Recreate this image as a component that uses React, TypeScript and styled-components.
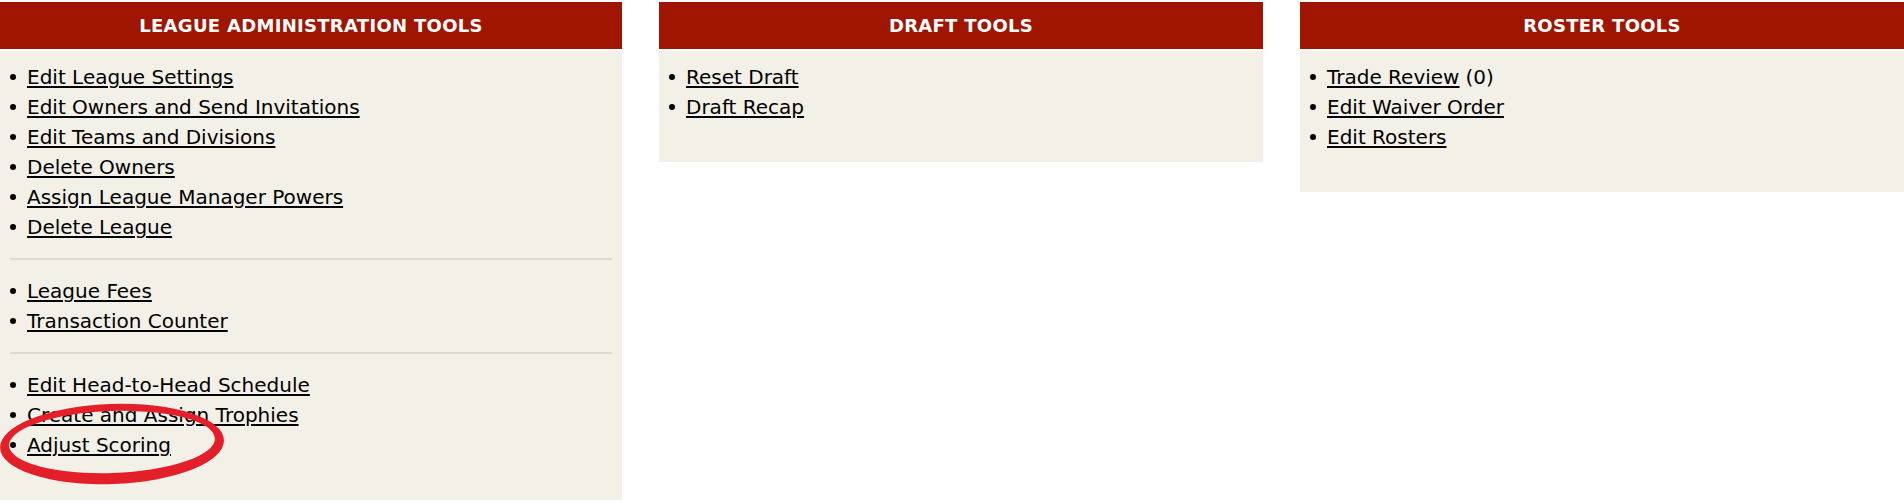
import styled, { createGlobalStyle } from 'styled-components';

interface ToolLink {
  label: string;
  note?: string;
}

interface ToolPanel {
  title: string;
  groups: ToolLink[][];
  circled?: boolean;
}

const panels: ToolPanel[] = [
  {
    title: 'League Administration Tools',
    circled: true,
    groups: [
      [
        { label: 'Edit League Settings' },
        { label: 'Edit Owners and Send Invitations' },
        { label: 'Edit Teams and Divisions' },
        { label: 'Delete Owners' },
        { label: 'Assign League Manager Powers' },
        { label: 'Delete League' },
      ],
      [{ label: 'League Fees' }, { label: 'Transaction Counter' }],
      [
        { label: 'Edit Head-to-Head Schedule' },
        { label: 'Create and Assign Trophies' },
        { label: 'Adjust Scoring' },
      ],
    ],
  },
  {
    title: 'Draft Tools',
    groups: [[{ label: 'Reset Draft' }, { label: 'Draft Recap' }]],
  },
  {
    title: 'Roster Tools',
    groups: [
      [
        { label: 'Trade Review', note: '(0)' },
        { label: 'Edit Waiver Order' },
        { label: 'Edit Rosters' },
      ],
    ],
  },
];

const GlobalStyle = createGlobalStyle`
  html, body {
    margin: 0;
    padding: 0;
    background: #ffffff;
  }
  body {
    font-family: "DejaVu Sans", Verdana, sans-serif;
    color: #000;
  }
`;

const Columns = styled.div`
  display: grid;
  grid-template-columns: 622px 604px 604px;
  column-gap: 37px;
  align-items: start;
  padding-top: 2px;
  width: 1904px;
`;

const Panel = styled.section`
  position: relative;
  display: flex;
  flex-direction: column;
`;

const Header = styled.h2`
  margin: 0;
  height: 47px;
  display: flex;
  align-items: center;
  justify-content: center;
  background: #a01500;
  color: #ffffff;
  font-family: "DejaVu Sans", Verdana, sans-serif;
  font-weight: bold;
  font-size: 18px;
  letter-spacing: 0.3px;
  text-transform: uppercase;
`;

const Body = styled.div`
  margin-top: 2px;
  background: #f3f0e7;
  padding: 11px 10px 40px;
`;

const Divider = styled.hr`
  margin: 16px 0;
  border: none;
  height: 2px;
  background: #dcdad4;
`;

const List = styled.ul`
  list-style: none;
  margin: 0;
  padding: 0;
`;

const Item = styled.li`
  display: flex;
  align-items: center;
  height: 30px;
  font-size: 20px;
  white-space: nowrap;

  &::before {
    content: '';
    width: 6px;
    height: 6px;
    border-radius: 50%;
    background: #000;
    margin-right: 11px;
    flex-shrink: 0;
  }
`;

const Link = styled.a`
  color: #000;
  text-decoration: underline;
  text-decoration-thickness: 2px;
  text-underline-offset: 2px;
  cursor: pointer;
`;

const Note = styled.span`
  margin-left: 6px;
`;

const Circle = styled.svg`
  position: absolute;
  left: 0;
  top: 400px;
  pointer-events: none;
`;

// hand-drawn red ring round the last admin link
const ScribbleRing = () => (
  <Circle width="240" height="92" viewBox="0 0 240 92">
    <g transform="rotate(-2 112 41)">
      <path
        fillRule="evenodd"
        fill="#e3202a"
        d="M0 42 a112 40 0 1 0 224 0 a112 40 0 1 0 -224 0 Z M9 40 a103 31 0 1 0 206 0 a103 31 0 1 0 -206 0 Z"
      />
    </g>
  </Circle>
);

const App = () => (
  <>
    <GlobalStyle />
    <Columns>
      {panels.map((panel) => (
        <Panel key={panel.title}>
          <Header>{panel.title}</Header>
          <Body>
            {panel.groups.map((group, gi) => (
              <div key={gi}>
                {gi > 0 && <Divider />}
                <List>
                  {group.map((link) => (
                    <Item key={link.label}>
                      <Link>{link.label}</Link>
                      {link.note && <Note>{link.note}</Note>}
                    </Item>
                  ))}
                </List>
              </div>
            ))}
          </Body>
          {panel.circled && <ScribbleRing />}
        </Panel>
      ))}
    </Columns>
  </>
);

export default App;
